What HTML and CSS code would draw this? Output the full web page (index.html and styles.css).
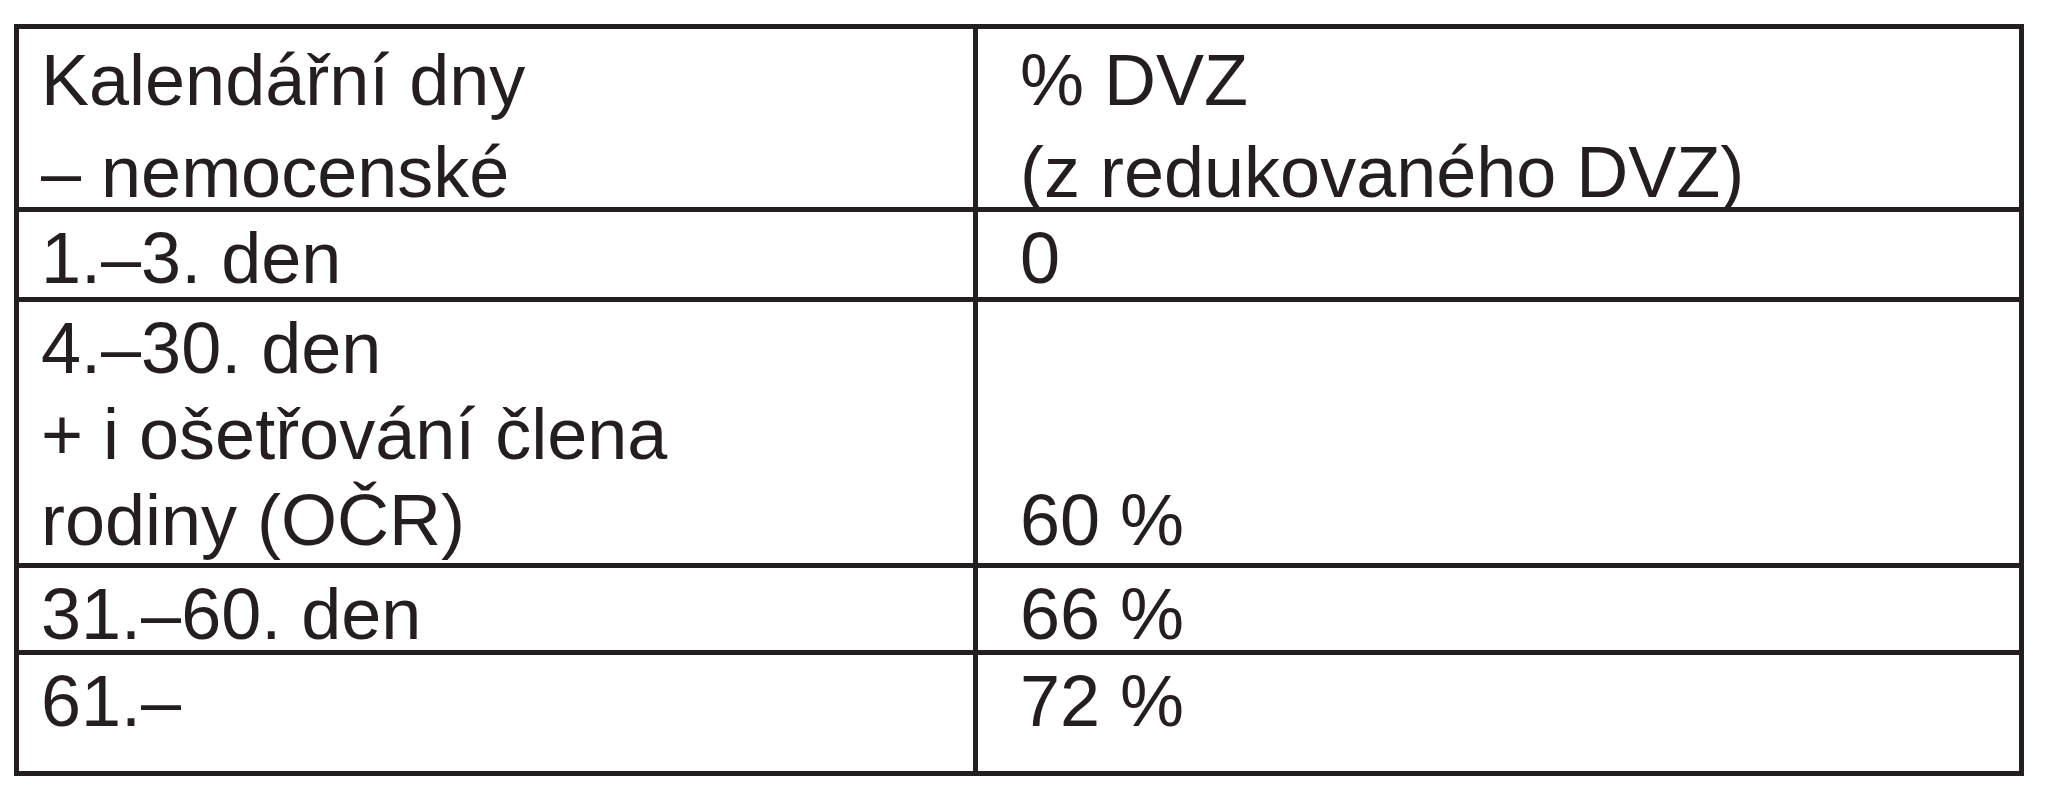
FILE: index.html
```html
<!DOCTYPE html>
<html lang="cs">
<head>
<meta charset="utf-8">
<title>Nemocenské</title>
<link rel="stylesheet" href="styles.css">
</head>
<body>
<div class="table">
  <div class="cell left head">Kalendářní dny<br>– nemocenské</div>
  <div class="cell right head">% DVZ<br>(z redukovaného DVZ)</div>
  <div class="cell left">1.–3. den</div>
  <div class="cell right">0</div>
  <div class="cell left">4.–30. den<br>+ i ošetřování člena<br>rodiny (OČR)</div>
  <div class="cell right bottom">60 %</div>
  <div class="cell left">31.–60. den</div>
  <div class="cell right">66 %</div>
  <div class="cell left last">61.–</div>
  <div class="cell right last">72 %</div>
</div>
</body>
</html>
```

FILE: styles.css
```css
html, body {
  margin: 0;
  padding: 0;
  background: #ffffff;
}

body {
  font-family: "Liberation Sans", Arial, sans-serif;
  color: #231f20;
}

.table {
  box-sizing: border-box;
  margin: 24px 0 0 14px;
  width: 2010px;
  border: 5px solid #231f20;
  display: grid;
  grid-template-columns: 959px 1fr;
  grid-template-rows: 183px 90px 266px 87px 116px;
}

.cell {
  box-sizing: border-box;
  font-size: 72px;
  line-height: 86px;
  padding-top: 3px;
  border-bottom: 5px solid #231f20;
  white-space: nowrap;
}

.left {
  padding-left: 22px;
  border-right: 5px solid #231f20;
}

.right {
  padding-left: 42px;
}

.head {
  line-height: 92px;
  padding-top: 5px;
}

.bottom {
  display: flex;
  flex-direction: column;
  justify-content: flex-end;
  padding-top: 0;
}

.last {
  border-bottom: none;
}
```
